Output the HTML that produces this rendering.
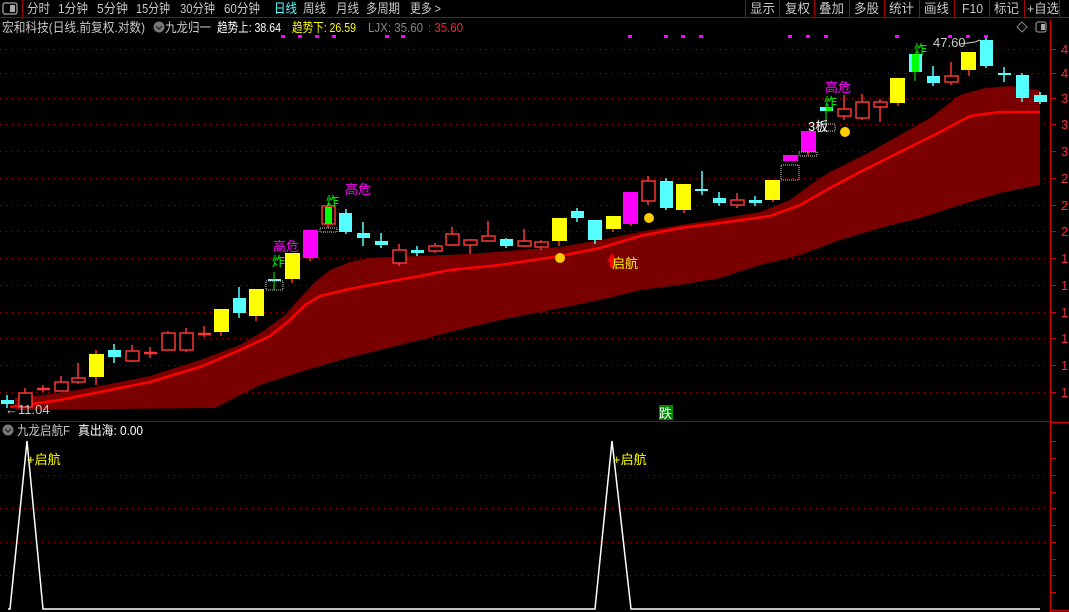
<!DOCTYPE html>
<html><head><meta charset="utf-8"><style>
html,body{margin:0;padding:0;background:#000;width:1069px;height:612px;overflow:hidden}
svg{display:block}
text{font-family:"Liberation Sans","Noto Sans CJK SC",sans-serif}
</style></head><body>
<svg width="1069" height="612" viewBox="0 0 1069 612" xmlns="http://www.w3.org/2000/svg">
<rect x="0" y="0" width="1069" height="18" fill="#000"/>
<line x1="0" y1="17.5" x2="1069" y2="17.5" stroke="#a00" stroke-width="1"/>
<line x1="22.5" y1="0" x2="22.5" y2="18" stroke="#a00"/>
<rect x="3" y="3" width="14" height="11" rx="2" fill="none" stroke="#aaa" stroke-width="1.2"/>
<rect x="10" y="5" width="5" height="7" fill="#aaa"/>
<g font-size="13" fill="#c8c8c8" lengthAdjust="spacingAndGlyphs">
<text x="27" y="13" textLength="23" lengthAdjust="spacingAndGlyphs">分时</text>
<text x="58" y="13" textLength="30" lengthAdjust="spacingAndGlyphs">1分钟</text>
<text x="97" y="13" textLength="31" lengthAdjust="spacingAndGlyphs">5分钟</text>
<text x="136" y="13" textLength="34" lengthAdjust="spacingAndGlyphs">15分钟</text>
<text x="180" y="13" textLength="35" lengthAdjust="spacingAndGlyphs">30分钟</text>
<text x="224" y="13" textLength="36" lengthAdjust="spacingAndGlyphs">60分钟</text>
<text x="274" y="13" fill="#5ff" textLength="23" lengthAdjust="spacingAndGlyphs">日线</text>
<text x="303" y="13" textLength="23" lengthAdjust="spacingAndGlyphs">周线</text>
<text x="336" y="13" textLength="23" lengthAdjust="spacingAndGlyphs">月线</text>
<text x="366" y="13" textLength="34" lengthAdjust="spacingAndGlyphs">多周期</text>
<text x="410" y="13" textLength="31" lengthAdjust="spacingAndGlyphs">更多 &gt;</text>
</g>
<g stroke="#a00"><line x1="745.5" y1="0" x2="745.5" y2="17"/><line x1="779.5" y1="0" x2="779.5" y2="17"/><line x1="814.5" y1="0" x2="814.5" y2="17"/><line x1="849.5" y1="0" x2="849.5" y2="17"/><line x1="884.5" y1="0" x2="884.5" y2="17"/><line x1="919.5" y1="0" x2="919.5" y2="17"/><line x1="954.5" y1="0" x2="954.5" y2="17"/><line x1="989.5" y1="0" x2="989.5" y2="17"/><line x1="1024.5" y1="0" x2="1024.5" y2="17"/><line x1="1059.5" y1="0" x2="1059.5" y2="17"/></g>
<g font-size="13" fill="#c8c8c8">
<text x="750" y="13" textLength="25" lengthAdjust="spacingAndGlyphs">显示</text>
<text x="785" y="13" textLength="25" lengthAdjust="spacingAndGlyphs">复权</text>
<text x="819" y="13" textLength="25" lengthAdjust="spacingAndGlyphs">叠加</text>
<text x="854" y="13" textLength="25" lengthAdjust="spacingAndGlyphs">多股</text>
<text x="889" y="13" textLength="25" lengthAdjust="spacingAndGlyphs">统计</text>
<text x="924" y="13" textLength="25" lengthAdjust="spacingAndGlyphs">画线</text>
<text x="962" y="13" textLength="21" lengthAdjust="spacingAndGlyphs">F10</text>
<text x="994" y="13" textLength="25" lengthAdjust="spacingAndGlyphs">标记</text>
<text x="1027" y="13" textLength="32" lengthAdjust="spacingAndGlyphs">+自选</text>
</g>
<g font-size="13">
<text x="2" y="32" fill="#c8c8c8" textLength="143" lengthAdjust="spacingAndGlyphs">宏和科技(日线.前复权.对数)</text>
<circle cx="159" cy="27" r="5.5" fill="#777"/>
<path d="M156 26 L159 29 L162 26" stroke="#222" fill="none" stroke-width="1.2"/>
<text x="165" y="32" fill="#c8c8c8" textLength="46" lengthAdjust="spacingAndGlyphs">九龙归一</text>
<text x="217" y="32" fill="#fff" textLength="64" lengthAdjust="spacingAndGlyphs">趋势上: 38.64</text>
<text x="292" y="32" fill="#ff0" textLength="64" lengthAdjust="spacingAndGlyphs">趋势下: 26.59</text>
<text x="368" y="32" fill="#888" textLength="55" lengthAdjust="spacingAndGlyphs">LJX: 35.60</text>
<text x="428" y="32" fill="#f22" textLength="35" lengthAdjust="spacingAndGlyphs">: 35.60</text>
</g>
<path d="M1022 22 L1027 27 L1022 32 L1017 27 Z" fill="none" stroke="#888"/>
<rect x="1036" y="22" width="10" height="10" rx="2" fill="none" stroke="#aaa"/><rect x="1041" y="24" width="4" height="6" fill="#aaa"/>
<line x1="1050.5" y1="20" x2="1050.5" y2="612" stroke="#c00" stroke-width="1.5"/>
<line x1="0" y1="421.5" x2="1050" y2="421.5" stroke="#a00" stroke-width="1"/>
<line x1="1050" y1="422.5" x2="1069" y2="422.5" stroke="#c00" stroke-width="1.5"/>
<line x1="1050" y1="610.5" x2="1069" y2="610.5" stroke="#c00" stroke-width="1.5"/>
<g stroke="#a00" stroke-width="1" stroke-dasharray="1 5">
<line x1="0" y1="49.5" x2="1048" y2="49.5"/><line x1="0" y1="73.5" x2="1048" y2="73.5"/><line x1="0" y1="98.5" x2="1048" y2="98.5"/>
<line x1="0" y1="124.5" x2="1048" y2="124.5"/><line x1="0" y1="151.5" x2="1048" y2="151.5"/><line x1="0" y1="178.5" x2="1048" y2="178.5"/>
<line x1="0" y1="205.5" x2="1048" y2="205.5"/><line x1="0" y1="231.5" x2="1048" y2="231.5"/><line x1="0" y1="258.5" x2="1048" y2="258.5"/>
<line x1="0" y1="285.5" x2="1048" y2="285.5"/><line x1="0" y1="312.5" x2="1048" y2="312.5"/><line x1="0" y1="338.5" x2="1048" y2="338.5"/>
<line x1="0" y1="365.5" x2="1048" y2="365.5"/><line x1="0" y1="392.5" x2="1048" y2="392.5"/>
<line x1="0" y1="475.5" x2="1048" y2="475.5"/><line x1="0" y1="508.5" x2="1048" y2="508.5"/><line x1="0" y1="542.5" x2="1048" y2="542.5"/><line x1="0" y1="575.5" x2="1048" y2="575.5"/>
</g>
<g stroke="#c00" stroke-width="1">
<line x1="1051" y1="49.5" x2="1056" y2="49.5"/><line x1="1051" y1="73.5" x2="1056" y2="73.5"/><line x1="1051" y1="98.5" x2="1056" y2="98.5"/><line x1="1051" y1="124.5" x2="1056" y2="124.5"/><line x1="1051" y1="151.5" x2="1056" y2="151.5"/><line x1="1051" y1="178.5" x2="1056" y2="178.5"/><line x1="1051" y1="205.5" x2="1056" y2="205.5"/><line x1="1051" y1="231.5" x2="1056" y2="231.5"/><line x1="1051" y1="258.5" x2="1056" y2="258.5"/><line x1="1051" y1="285.5" x2="1056" y2="285.5"/><line x1="1051" y1="312.5" x2="1056" y2="312.5"/><line x1="1051" y1="338.5" x2="1056" y2="338.5"/><line x1="1051" y1="365.5" x2="1056" y2="365.5"/><line x1="1051" y1="392.5" x2="1056" y2="392.5"/>
<line x1="1051" y1="441.5" x2="1056" y2="441.5"/><line x1="1051" y1="458.5" x2="1056" y2="458.5"/><line x1="1051" y1="475.5" x2="1056" y2="475.5"/><line x1="1051" y1="492.5" x2="1056" y2="492.5"/><line x1="1051" y1="508.5" x2="1056" y2="508.5"/><line x1="1051" y1="525.5" x2="1056" y2="525.5"/><line x1="1051" y1="542.5" x2="1056" y2="542.5"/><line x1="1051" y1="559.5" x2="1056" y2="559.5"/><line x1="1051" y1="575.5" x2="1056" y2="575.5"/><line x1="1051" y1="592.5" x2="1056" y2="592.5"/>
</g>
<g font-size="13" fill="#e33">
<text x="1061" y="54">4</text><text x="1061" y="78">4</text><text x="1061" y="103">3</text><text x="1061" y="129">3</text><text x="1061" y="156">3</text><text x="1061" y="183">2</text><text x="1061" y="210">2</text><text x="1061" y="236">2</text><text x="1061" y="263">1</text><text x="1061" y="290">1</text><text x="1061" y="317">1</text><text x="1061" y="343">1</text><text x="1061" y="370">1</text><text x="1061" y="397">1</text>
</g>
<path d="M15 398 L60 393 L100 386 L150 376 L200 360 L240 345 L265 330 L285 315 L300 298 L315 282 L330 270 L350 262 L370 258 L420 256 L470 254 L520 250 L560 247 L600 240 L650 230 L700 222 L760 212 L790 200 L810 185 L830 172 L870 152 L900 135 L930 118 L960 95 L985 88 L1010 86 L1040 90 L1040 185 L1000 193 L960 205 L920 218 L880 228 L840 240 L800 255 L760 265 L720 278 L680 285 L640 290 L600 300 L550 310 L500 320 L450 332 L400 345 L340 360 L300 372 L260 385 L215 408 L15 410 Z" fill="#7a0000"/>
<path d="M10 407 L60 400 L100 392 L150 382 L200 367 L240 350 L270 336 L290 320 L305 305 L320 296 L345 290 L370 285 L420 276 L450 270 L500 265 L560 256 L600 248 L640 236 L680 228 L720 223 L770 216 L800 205 L830 188 L860 172 L900 152 L940 132 L970 116 L1000 112 L1040 112" fill="none" stroke="#f00" stroke-width="2.5"/>
<g stroke-width="1.5">
<g fill="#000" stroke="#f33">
<line x1="25" y1="388" x2="25" y2="408"/><rect x="19" y="393" width="13" height="14"/>
<line x1="61" y1="376" x2="61" y2="391"/><rect x="55" y="382" width="13" height="9"/>
<line x1="78" y1="363" x2="78" y2="384"/><rect x="72" y="378" width="13" height="4"/>
<line x1="132" y1="345" x2="132" y2="362"/><rect x="126" y="351" width="13" height="10"/>
<line x1="168" y1="331" x2="168" y2="350"/><rect x="162" y="333" width="13" height="17"/>
<line x1="186" y1="328" x2="186" y2="352"/><rect x="180" y="333" width="13" height="17"/>
<line x1="399" y1="244" x2="399" y2="266"/><rect x="393" y="250" width="13" height="13"/>
<line x1="435" y1="243" x2="435" y2="253"/><rect x="429" y="246" width="13" height="5"/>
<line x1="452" y1="227" x2="452" y2="246"/><rect x="446" y="234" width="13" height="11"/>
<line x1="470" y1="239" x2="470" y2="254"/><rect x="464" y="240" width="13" height="5"/>
<line x1="488" y1="221" x2="488" y2="242"/><rect x="482" y="236" width="13" height="5"/>
<line x1="524" y1="229" x2="524" y2="247"/><rect x="518" y="241" width="13" height="5"/>
<line x1="541" y1="240" x2="541" y2="250"/><rect x="535" y="242" width="13" height="5"/>
<line x1="648" y1="176" x2="648" y2="205"/><rect x="642" y="181" width="13" height="20"/>
<line x1="737" y1="193" x2="737" y2="208"/><rect x="731" y="200" width="13" height="5"/>
<line x1="844" y1="95" x2="844" y2="120"/><rect x="838" y="109" width="13" height="7"/>
<line x1="862" y1="94" x2="862" y2="120"/><rect x="856" y="102" width="13" height="16"/>
<line x1="880" y1="99" x2="880" y2="122"/><rect x="874" y="102" width="13" height="5"/>
<line x1="951" y1="62" x2="951" y2="85"/><rect x="945" y="76" width="13" height="6"/>
<line x1="328" y1="203" x2="328" y2="228"/><rect x="322" y="206" width="13" height="18"/>
</g>
<g stroke="#f33" stroke-width="2.5">
<line x1="37" y1="389" x2="50" y2="389"/><line x1="144" y1="353" x2="157" y2="353"/><line x1="198" y1="334" x2="211" y2="334"/>
</g>
<g stroke="#f33"><line x1="43" y1="385" x2="43" y2="392"/><line x1="150" y1="347" x2="150" y2="358"/><line x1="204" y1="326" x2="204" y2="337"/></g>
<g stroke="#5ff"><line x1="7" y1="395" x2="7" y2="408"/><line x1="114" y1="344" x2="114" y2="363"/><line x1="239" y1="287" x2="239" y2="318"/><line x1="346" y1="209" x2="346" y2="234"/><line x1="363" y1="222" x2="363" y2="246"/><line x1="381" y1="233" x2="381" y2="248"/><line x1="417" y1="246" x2="417" y2="256"/><line x1="506" y1="238" x2="506" y2="248"/><line x1="577" y1="208" x2="577" y2="222"/><line x1="595" y1="220" x2="595" y2="244"/><line x1="666" y1="178" x2="666" y2="210"/><line x1="702" y1="171" x2="702" y2="195"/><line x1="719" y1="192" x2="719" y2="206"/><line x1="755" y1="196" x2="755" y2="206"/><line x1="933" y1="66" x2="933" y2="86"/><line x1="986" y1="38" x2="986" y2="68"/><line x1="1004" y1="67" x2="1004" y2="82"/><line x1="1022" y1="73" x2="1022" y2="102"/><line x1="1040" y1="92" x2="1040" y2="104"/></g>
<g stroke="#f33"><line x1="96" y1="350" x2="96" y2="385"/><line x1="221" y1="330" x2="221" y2="336"/><line x1="256" y1="315" x2="256" y2="321"/><line x1="292" y1="277" x2="292" y2="283"/><line x1="559" y1="240" x2="559" y2="246"/><line x1="613" y1="228" x2="613" y2="232"/><line x1="684" y1="208" x2="684" y2="213"/><line x1="773" y1="197" x2="773" y2="202"/><line x1="898" y1="100" x2="898" y2="106"/><line x1="969" y1="69" x2="969" y2="76"/><line x1="310" y1="257" x2="310" y2="261"/><line x1="631" y1="222" x2="631" y2="226"/><line x1="808" y1="150" x2="808" y2="155"/></g>
</g>
<g stroke="none">
<rect x="1" y="400" width="13" height="4" fill="#5ff"/>
<rect x="89" y="354" width="15" height="23" fill="#ff0"/>
<rect x="108" y="350" width="13" height="7" fill="#5ff"/>
<rect x="214" y="309" width="15" height="23" fill="#ff0"/>
<rect x="233" y="298" width="13" height="15" fill="#5ff"/>
<rect x="249" y="289" width="15" height="27" fill="#ff0"/>
<rect x="285" y="253" width="15" height="26" fill="#ff0"/>
<rect x="303" y="230" width="15" height="28" fill="#f0f"/>
<rect x="325" y="207" width="7" height="17" fill="#0f0"/>
<rect x="339" y="213" width="13" height="19" fill="#5ff"/>
<rect x="357" y="233" width="13" height="5" fill="#5ff"/>
<rect x="375" y="241" width="13" height="4" fill="#5ff"/>
<rect x="411" y="250" width="13" height="3" fill="#5ff"/>
<rect x="500" y="239" width="13" height="7" fill="#5ff"/>
<rect x="552" y="218" width="15" height="23" fill="#ff0"/>
<rect x="571" y="211" width="13" height="7" fill="#5ff"/>
<rect x="588" y="220" width="14" height="20" fill="#5ff"/>
<rect x="606" y="216" width="15" height="13" fill="#ff0"/>
<rect x="623" y="192" width="15" height="32" fill="#f0f"/>
<rect x="660" y="181" width="13" height="27" fill="#5ff"/>
<rect x="676" y="184" width="15" height="26" fill="#ff0"/>
<rect x="695" y="189" width="13" height="2" fill="#5ff"/>
<rect x="713" y="198" width="13" height="5" fill="#5ff"/>
<rect x="749" y="200" width="13" height="3" fill="#5ff"/>
<rect x="765" y="180" width="15" height="20" fill="#ff0"/>
<rect x="783" y="155" width="15" height="6" fill="#f0f"/>
<rect x="801" y="131" width="15" height="21" fill="#f0f"/>
<rect x="820" y="107" width="13" height="4" fill="#5ff"/>
<rect x="826" y="107" width="6" height="4" fill="#0f0"/>
<rect x="890" y="78" width="15" height="25" fill="#ff0"/>
<rect x="909" y="54" width="13" height="18" fill="#5ff"/>
<rect x="912" y="54" width="7" height="18" fill="#0f0"/>
<rect x="927" y="76" width="13" height="7" fill="#5ff"/>
<rect x="961" y="52" width="15" height="18" fill="#ff0"/>
<rect x="980" y="40" width="13" height="26" fill="#5ff"/>
<rect x="998" y="73" width="13" height="2" fill="#5ff"/>
<rect x="1016" y="75" width="13" height="23" fill="#5ff"/>
<rect x="1034" y="95" width="13" height="7" fill="#5ff"/>
<rect x="268" y="279" width="13" height="2" fill="#5ff"/>
</g>
<g stroke="#0f0"><line x1="274" y1="272" x2="274" y2="290"/><line x1="915" y1="72" x2="915" y2="81"/><line x1="826" y1="111" x2="826" y2="124"/></g>
<g fill="none" stroke="#ccc" stroke-dasharray="1 1">
<rect x="266" y="281" width="17" height="9"/><rect x="320" y="228" width="17" height="4"/>
<rect x="781" y="165" width="18" height="15"/><rect x="799" y="152" width="18" height="4"/><rect x="818" y="124" width="17" height="7"/>
</g>
<g fill="#fc0"><circle cx="560" cy="258" r="5"/><circle cx="649" cy="218" r="5"/><circle cx="845" cy="132" r="5"/></g>
<path d="M612 253 L607 262 L610 262 L610 268 L614 268 L614 262 L617 262 Z" fill="#f00"/>
<g fill="#f0f">
<rect x="281" y="35" width="4" height="3"/><rect x="298" y="35" width="4" height="3"/><rect x="315" y="35" width="4" height="3"/><rect x="332" y="35" width="4" height="3"/><rect x="385" y="35" width="4" height="3"/><rect x="401" y="35" width="4" height="3"/>
<rect x="628" y="35" width="4" height="3"/><rect x="664" y="35" width="4" height="3"/><rect x="681" y="35" width="4" height="3"/><rect x="699" y="35" width="4" height="3"/>
<rect x="788" y="35" width="4" height="3"/><rect x="806" y="35" width="4" height="3"/><rect x="824" y="35" width="4" height="3"/><rect x="895" y="35" width="4" height="3"/><rect x="948" y="35" width="4" height="3"/><rect x="966" y="35" width="4" height="3"/><rect x="984" y="35" width="4" height="3"/>
</g>
<g font-size="13">
<text x="345" y="194" fill="#f0f">高危</text>
<text x="273" y="251" fill="#f0f">高危</text>
<text x="825" y="92" fill="#f0f">高危</text>
<text x="326" y="206" fill="#0f0">炸</text>
<text x="272" y="266" fill="#0f0">炸</text>
<text x="824" y="107" fill="#0f0">炸</text>
<text x="914" y="54" fill="#0f0">炸</text>
<text x="808" y="131" fill="#fff">3板</text>
<text x="612" y="268" fill="#ff0">启航</text>
<text x="933" y="47" fill="#ccc">47.60</text>
<text x="5" y="414" fill="#ccc">←11.04</text>
</g>
<path d="M960 44 L975 42 L980 40" stroke="#ccc" fill="none"/>
<rect x="659" y="405" width="14" height="15" fill="#080"/>
<text x="659" y="418" font-size="13" fill="#fff">跌</text>
<circle cx="8" cy="430" r="5.5" fill="#777"/>
<path d="M5 429 L8 432 L11 429" stroke="#222" fill="none" stroke-width="1.2"/>
<text x="17" y="435" font-size="13" fill="#c8c8c8" textLength="53" lengthAdjust="spacingAndGlyphs">九龙启航F</text>
<text x="78" y="435" font-size="13" fill="#fff" textLength="65" lengthAdjust="spacingAndGlyphs">真出海: 0.00</text>
<path d="M8 609 L10 609 L27 441 L43 609 L595 609 L612 441 L631 609 L1040 609" fill="none" stroke="#fff" stroke-width="1.5"/>
<g font-size="13" fill="#ff0"><text x="27" y="464">+启航</text><text x="613" y="464">+启航</text></g>
</svg>
</body></html>
